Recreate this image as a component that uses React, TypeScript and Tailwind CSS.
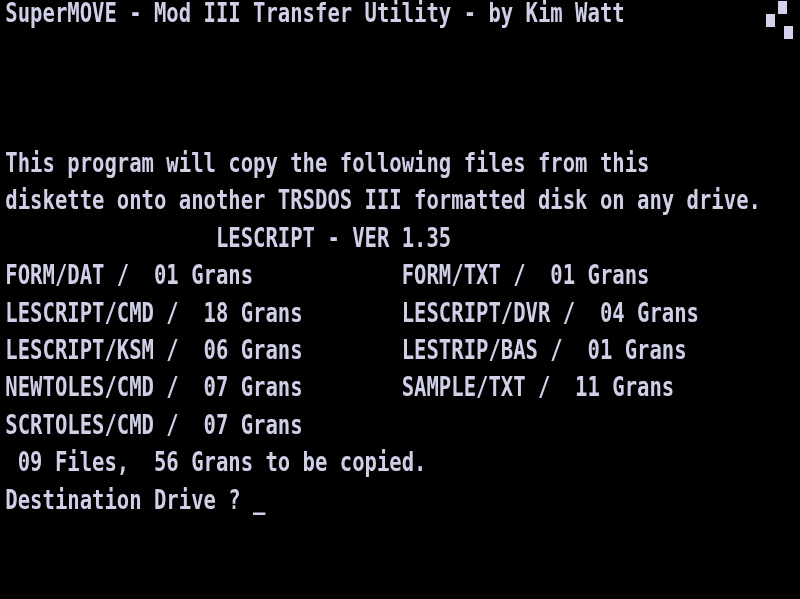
const lines: string[] = [
  'SuperMOVE - Mod III Transfer Utility - by Kim Watt',
  '',
  '',
  '',
  'This program will copy the following files from this',
  'diskette onto another TRSDOS III formatted disk on any drive.',
  '                 LESCRIPT - VER 1.35',
  'FORM/DAT /  01 Grans            FORM/TXT /  01 Grans',
  'LESCRIPT/CMD /  18 Grans        LESCRIPT/DVR /  04 Grans',
  'LESCRIPT/KSM /  06 Grans        LESTRIP/BAS /  01 Grans',
  'NEWTOLES/CMD /  07 Grans        SAMPLE/TXT /  11 Grans',
  'SCRTOLES/CMD /  07 Grans',
  ' 09 Files,  56 Grans to be copied.',
  'Destination Drive ? _',
  '',
  '',
];

function Pixels() {
  // semigraphics blocks in the top right corner
  return (
    <svg className="absolute top-0 left-[760px] blur-[0.6px]" width="40" height="42" viewBox="0 0 40 42">
      <rect x="18" y="1" width="9" height="13" fill="#d2d2ec" />
      <rect x="6" y="14" width="9" height="13" fill="#d2d2ec" />
      <rect x="24" y="26" width="9" height="13" fill="#d2d2ec" />
    </svg>
  );
}

export default function App() {
  return (
    <div className="relative w-[800px] h-[599px] bg-black overflow-hidden">
      <div className="pl-[7px] origin-top-left scale-x-[0.762] w-[1050px] blur-[0.5px] text-[#cfcfe8] font-['DejaVu_Sans_Mono',monospace] font-bold text-[27px] whitespace-pre">
        {lines.map((line, i) => (
          <div key={i} className="h-[37.44px] leading-[25px]">
            {line}
          </div>
        ))}
      </div>
      <Pixels />
    </div>
  );
}
